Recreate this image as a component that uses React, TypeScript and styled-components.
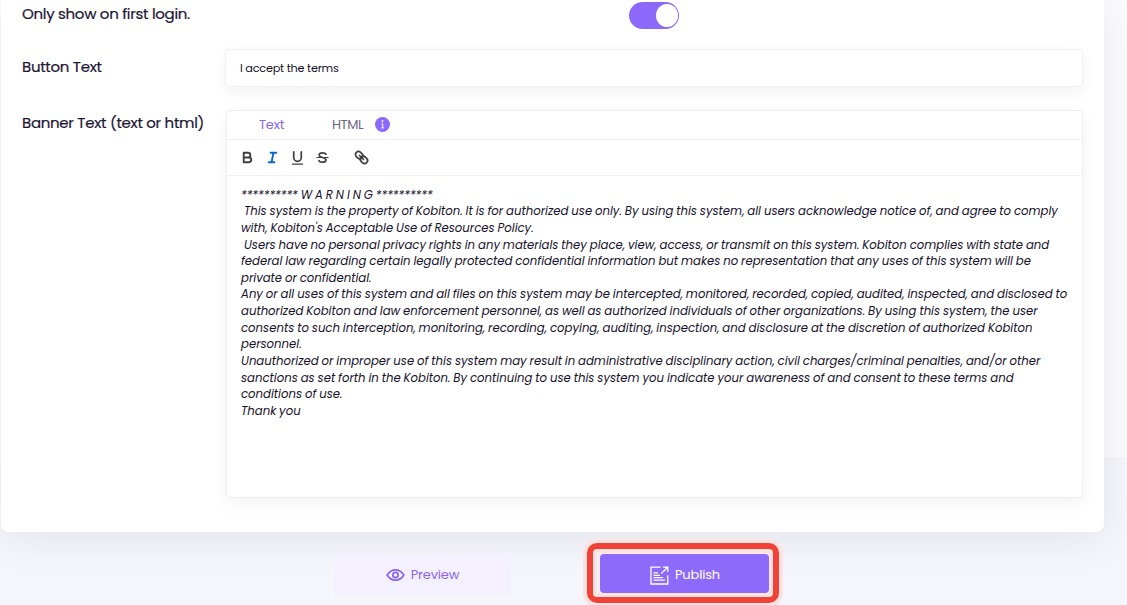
import React from 'react';
import styled, { createGlobalStyle } from 'styled-components';

const GlobalStyle = createGlobalStyle`
  *, *::before, *::after { box-sizing: border-box; }
  body { margin: 0; overflow: hidden; }
  body, button, input { font-family: Poppins, Inter, "Open Sans", sans-serif; }
`;

const Page = styled.div`
  height: 605px;
  overflow: hidden;
  background: linear-gradient(#fbfbfd 0 457px, #f4f6fb 457px);
`;

const Card = styled.main`
  width: 1103px;
  height: 532px;
  margin-left: 1px;
  padding: 2px 21px 0;
  background: #fff;
  border-radius: 0 0 8px 8px;
  box-shadow: 0 6px 40px rgba(20, 15, 35, 0.08);
`;

const Row = styled.div<{ $gap?: number }>`
  display: grid;
  grid-template-columns: 203px 858px;
  align-items: start;
  margin-bottom: ${p => p.$gap ?? 0}px;
`;

const Label = styled.label<{ $top: number }>`
  padding-top: ${p => p.$top}px;
  font-size: 15px;
  line-height: 22px;
  letter-spacing: -0.3px;
  color: #1c1533;
  white-space: nowrap;
  -webkit-text-stroke: 0.2px #1c1533;
`;

const Switch = styled.button`
  display: flex;
  justify-content: flex-end;
  align-items: center;
  justify-self: center;
  width: 50px;
  height: 27px;
  padding: 0 1px 0 0;
  border: 0;
  border-radius: 14px;
  background: #8c69fb;
`;

const Thumb = styled.span`
  width: 22px;
  height: 23px;
  border-radius: 50%;
  background: #fff;
`;

const TextInput = styled.input`
  width: 858px;
  height: 38px;
  padding: 0 14px;
  border: 1px solid #f0f0f4;
  border-radius: 4px;
  outline: 0;
  background: #fff;
  box-shadow: 0 5px 15px rgba(20, 20, 40, 0.05);
  font-size: 11.3px;
  letter-spacing: -0.25px;
  color: #14101f;
`;

const Editor = styled.section`
  width: 857px;
  height: 388px;
  margin-left: 1px;
  border: 1px solid #ededf3;
  border-radius: 4px;
  background: #fff;
  box-shadow: 0 5px 18px rgba(20, 20, 40, 0.05);
`;

const Tabs = styled.div`
  display: flex;
  align-items: center;
  height: 29px;
  padding: 0 0 1px 32px;
  border-bottom: 1px solid #f0f0f5;
`;

const Tab = styled.button<{ $active?: boolean }>`
  width: ${p => (p.$active ? 73 : 43)}px;
  padding: 0;
  border: 0;
  background: none;
  text-align: left;
  font-size: 13px;
  line-height: 20px;
  letter-spacing: ${p => (p.$active ? -0.2 : -0.4)}px;
  color: ${p => (p.$active ? '#8a66ef' : '#6b6883')};
`;

const Toolbar = styled.div`
  display: flex;
  align-items: center;
  height: 36px;
  padding: 0 0 1px 8px;
  border-bottom: 1px solid #f0f0f5;
`;

const Tool = styled.button<{ $active?: boolean; $apart?: boolean }>`
  display: flex;
  justify-content: center;
  width: 25px;
  margin-left: ${p => (p.$apart ? 14 : 0)}px;
  padding: 0;
  border: 0;
  background: none;
  color: ${p => (p.$active ? '#0866d0' : '#3f3f3f')};
`;

const Content = styled.div`
  padding: 10.7px 0 0 14px;
  font-size: 11.7px;
  font-style: italic;
  line-height: 16.62px;
  word-spacing: -0.58px;
  color: #17122c;
`;

const Line = styled.div`
  white-space: pre;
`;

const Actions = styled.footer`
  display: flex;
  padding: 11px 0 0 335px;
`;

const ActionButton = styled.button<{ $primary?: boolean }>`
  display: flex;
  align-items: center;
  justify-content: center;
  gap: 6px;
  width: ${p => (p.$primary ? 169 : 176)}px;
  height: ${p => (p.$primary ? 39 : 43)}px;
  padding: ${p => (p.$primary ? '3px 0 0 1px' : '1px 1px 0 0')};
  border: 0;
  border-radius: 4px;
  background: ${p => (p.$primary ? '#8e6afb' : '#f5f0fe')};
  color: ${p => (p.$primary ? '#fff' : '#8a66ef')};
  font-size: 13px;
  letter-spacing: -0.15px;
`;

const PreviewSlot = styled.div`
  width: 252px;
  padding-top: 10px;
`;

const Highlight = styled.div`
  display: flex;
  width: 192px;
  height: 60px;
  padding: 5px 0 0 7px;
  border: 6px solid #f14237;
  border-radius: 10px;
  background: #f2f0f6;
  box-shadow: 0 0 0 4px #fde2e1, inset 0 0 0 4px #fde2e1;
`;

const lines = [
  '********** W A R N I N G **********',
  ' This system is the property of Kobiton. It is for authorized use only. By using this system, all users acknowledge notice of, and agree to comply',
  "with, Kobiton's Acceptable Use of Resources Policy.",
  ' Users have no personal privacy rights in any materials they place, view, access, or transmit on this system. Kobiton complies with state and',
  'federal law regarding certain legally protected confidential information but makes no representation that any uses of this system will be',
  'private or confidential.',
  'Any or all uses of this system and all files on this system may be intercepted, monitored, recorded, copied, audited, inspected, and disclosed to',
  'authorized Kobiton and law enforcement personnel, as well as authorized individuals of other organizations. By using this system, the user',
  'consents to such interception, monitoring, recording, copying, auditing, inspection, and disclosure at the discretion of authorized Kobiton',
  'personnel.',
  'Unauthorized or improper use of this system may result in administrative disciplinary action, civil charges/criminal penalties, and/or other',
  'sanctions as set forth in the Kobiton. By continuing to use this system you indicate your awareness of and consent to these terms and',
  'conditions of use.',
  'Thank you',
];

const stroke = { fill: 'none', stroke: 'currentColor' };

// Toolbar glyphs share Quill's 18-unit grid.
const ToolIcon = ({ children }: { children: React.ReactNode }) => (
  <svg width="17" height="17" viewBox="0 0 18 18" {...stroke} strokeWidth="2" strokeLinecap="round" strokeLinejoin="round">
    {children}
  </svg>
);

const InfoIcon = () => (
  <svg width="15" height="15" viewBox="0 0 15 15">
    <circle cx="7.5" cy="7.5" r="7.5" fill="#8c69fb" />
    <circle cx="7.5" cy="4.3" r="1" fill="#fff" />
    <path d="M6.500 6.800h1.200v4M6.200 10.900h2.800" fill="none" stroke="#fff" strokeWidth="1" />
  </svg>
);

const EyeIcon = () => (
  <svg width="19" height="14" viewBox="0 0 20 14" {...stroke} strokeWidth="1.8">
    <path d="M1.2 7C3.5 3.3 6.4 1.5 10 1.5S16.500 3.300 18.800 7C16.500 10.700 13.600 12.500 10 12.500S3.500 10.700 1.200 7Z" />
    <circle cx="10" cy="7" r="2.8" />
  </svg>
);

const PublishIcon = () => (
  <svg width="19" height="19" viewBox="0 0 19 19" {...stroke} strokeWidth="1.300">
    <path d="M10.500 1.200H1v16.800h16.800V9.500" />
    <path d="M3.500 6.900h4.500M3.500 9.300h6.500M3.500 11.700h9.500M3.500 14.200h11.500" />
    <path d="M11.300 7.600L17.600 1.300M13 1.200h4.800V6" />
  </svg>
);

export default function App() {
  return (
    <Page>
      <GlobalStyle />
      <Card>
        <Row $gap={20}>
          <Label $top={1}>Only show on first login.</Label>
          <Switch aria-label="Only show on first login"><Thumb /></Switch>
        </Row>
        <Row $gap={23}>
          <Label $top={7}>Button Text</Label>
          <TextInput defaultValue="I accept the terms" />
        </Row>
        <Row>
          <Label $top={2}>Banner Text (text or html)</Label>
          <Editor>
            <Tabs>
              <Tab $active>Text</Tab>
              <Tab>HTML</Tab>
              <InfoIcon />
            </Tabs>
            <Toolbar>
              <Tool aria-label="Bold">
                <ToolIcon>
                  <path d="M5 4h4.500a2.500 2.500 0 0 1 0 5H5zM5 9h5.500a2.500 2.500 0 0 1 0 5H5z" />
                </ToolIcon>
              </Tool>
              <Tool aria-label="Italic" $active>
                <ToolIcon><path d="M7 4h6M5 14h6M8 14l2-10" /></ToolIcon>
              </Tool>
              <Tool aria-label="Underline">
                <ToolIcon>
                  <path d="M5 3v6a4 4 0 0 0 8 0V3" strokeWidth="1.800" />
                  <path d="M3.500 16h11" strokeWidth="1.100" />
                </ToolIcon>
              </Tool>
              <Tool aria-label="Strike">
                <ToolIcon>
                  <path d="M12.700 5.600C12 4.400 10.800 4 9 4 6.800 4 5.500 4.900 5.500 6.400 5.500 8 7 8.500 9 9s3.700 1 3.700 2.600C12.700 13.100 11.300 14 9 14c-1.900 0-3.200-.6-3.800-1.800" strokeWidth="1.800" />
                  <path d="M3 9h12" strokeWidth="1.200" />
                </ToolIcon>
              </Tool>
              <Tool aria-label="Link" $apart>
                <ToolIcon>
                  <g strokeWidth="1.800" transform="rotate(45 9 9)">
                    <rect x="1.300" y="5.800" width="8.200" height="6.400" rx="3.200" />
                    <rect x="8.500" y="5.800" width="8.200" height="6.400" rx="3.200" />
                    <path d="M6 9h6" />
                  </g>
                </ToolIcon>
              </Tool>
            </Toolbar>
            <Content>
              {lines.map(line => <Line key={line}>{line}</Line>)}
            </Content>
          </Editor>
        </Row>
      </Card>
      <Actions>
        <PreviewSlot>
          <ActionButton><EyeIcon />Preview</ActionButton>
        </PreviewSlot>
        <Highlight>
          <ActionButton $primary><PublishIcon />Publish</ActionButton>
        </Highlight>
      </Actions>
    </Page>
  );
}
